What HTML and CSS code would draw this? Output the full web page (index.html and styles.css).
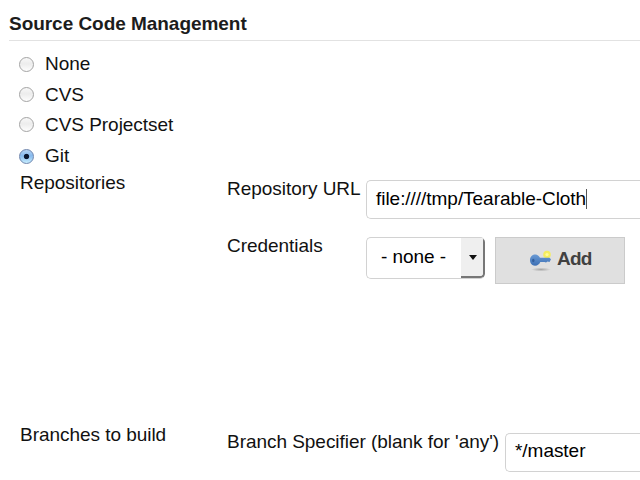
FILE: index.html
```html
<!DOCTYPE html>
<html lang="en">
<head>
<meta charset="utf-8">
<title>Source Code Management</title>
<link rel="stylesheet" href="styles.css">
</head>
<body>
<main class="config">
  <h1 class="section-title">Source Code Management</h1>
  <div class="scm-list">
    <div class="scm-option"><span class="radio"></span><span>None</span></div>
    <div class="scm-option option-low"><span class="radio"></span><span>CVS</span></div>
    <div class="scm-option option-low"><span class="radio"></span><span>CVS Projectset</span></div>
    <div class="scm-option"><span class="radio radio-checked"></span><span>Git</span></div>
  </div>
  <section class="setting repositories">
    <div class="setting-name">Repositories</div>
    <div class="fields">
      <div class="field">
        <span class="label">Repository URL</span>
        <div class="textbox">file:////tmp/Tearable-Cloth<span class="caret"></span></div>
      </div>
      <div class="field credentials">
        <span class="label">Credentials</span>
        <div class="select"><span class="select-value">- none -</span><span class="select-arrow"></span></div>
        <div class="button">
          <svg class="key" width="24" height="22" viewBox="0 0 24 22">
            <defs>
              <radialGradient id="shade"><stop offset="0" stop-color="#a5a5a5"/><stop offset="1" stop-color="#a5a5a5" stop-opacity="0"/></radialGradient>
              <linearGradient id="blue" x2="0" y2="1"><stop offset="0" stop-color="#6a9ad4"/><stop offset="1" stop-color="#3c6fb4"/></linearGradient>
            </defs>
            <ellipse cx="12" cy="19.5" rx="10" ry="1.9" fill="url(#shade)"/>
            <circle cx="18" cy="4.5" r="3.8" fill="#f7ee50" opacity=".9"/>
            <circle cx="18" cy="4.5" r="1.6" fill="#fffb9c"/>
            <path d="M6 4.500C8.500 4.500 10 6 11 7.700H20.500L22 9.300 20.500 12 18.500 11.600 17 12.600 15.500 12H11.300C10.500 14 8.800 15.700 6 15.700 3 15.700 1 13.200 1 10.100S3 4.500 6 4.500Z" fill="url(#blue)"/>
            <ellipse cx="4.300" cy="10.500" rx="1.200" ry="1.800" fill="#335f9c"/>
          </svg>
          <span>Add</span>
        </div>
      </div>
    </div>
  </section>
  <section class="setting branches">
    <div class="setting-name">Branches to build</div>
    <div class="fields">
      <div class="field">
        <span class="label label-long">Branch Specifier (blank for 'any')</span>
        <div class="textbox">*/master</div>
      </div>
    </div>
  </section>
</main>
</body>
</html>
```
FILE: styles.css
```css
* { box-sizing: border-box; }
body {
  margin: 0;
  background: #fff;
  color: #111;
  font: 19px/24px "Liberation Sans", Arial, sans-serif;
  letter-spacing: -0.04px;
  white-space: nowrap;
  overflow: hidden;
}
.config { height: 480px; padding-top: 12px; overflow: hidden; }
.section-title {
  margin: 0 0 0 9px;
  height: 29px;
  border-bottom: 1px solid #e2e2e2;
  color: #1c1c1c;
  font-size: 19px;
  line-height: 24px;
}
.scm-list { display: grid; grid-template-rows: 30px 30px 32px 24px; padding: 11px 0 0 19px; }
.scm-option { display: flex; height: 24px; gap: 11px; }
.option-low { padding-top: 1px; }
.option-low .radio { margin-top: 4px; }
.radio {
  width: 15px;
  height: 15px;
  margin-top: 5px;
  border: 1px solid #a4a4a4;
  border-radius: 50%;
  background: linear-gradient(#f8f8f8, #ececec 45%, #fdfdfd);
}
.radio-checked {
  border-color: #6f86ae;
  background: radial-gradient(circle, #0b1730 0 2.2px, transparent 3.1px), linear-gradient(#b5d3f3, #86baee 45%, #c8eefe);
}
.setting { display: grid; grid-template-columns: 207px 1fr; padding-left: 20px; }
.repositories { margin-top: 3px; height: 252px; }
.fields { min-width: 0; }
.field { display: flex; align-items: flex-start; }
.label { flex: none; width: 139px; }
.label-long { width: 278px; }
.repositories .fields { padding-top: 6px; }
.textbox {
  flex: 1;
  height: 39px;
  padding: 5px 9px;
  border: 1px solid #d2d2d2;
  border-right: 0;
  border-radius: 5px 0 0 5px;
  color: #000;
}
.repositories .textbox { margin-top: 3px; padding-top: 6px; }
.caret { display: inline-block; width: 1px; height: 20px; background: #555; vertical-align: -4px; }
.credentials { margin-top: 15px; }
.select {
  display: flex;
  width: 119px;
  height: 42px;
  margin-top: 3px;
  border: 1px solid #d2d2d2;
  border-right: 0;
  border-radius: 5px;
  overflow: hidden;
  color: #000;
}
.select-value { flex: 1; padding: 7px 0 0 14px; }
.select-arrow {
  display: flex;
  align-items: center;
  justify-content: center;
  width: 24px;
  border-right: 2px solid #777;
  border-bottom: 2px solid #777;
  border-radius: 0 0 4px 0;
  background: #efefef;
}
.select-arrow::before {
  content: "";
  margin-left: 2px;
  border: 4.5px solid transparent;
  border-top: 5px solid #111;
  border-bottom: 0;
}
.button {
  display: flex;
  width: 130px;
  height: 47px;
  margin: 3px 0 0 10px;
  padding: 9px 0 0 33px;
  border: 1px solid #cbcbcb;
  background: #e0e0e0;
  color: #414141;
  font-weight: bold;
  letter-spacing: -0.8px;
}
.key { flex: none; margin: 3px 4px 0 0; }
.branches .label { padding-top: 7px; }
.branches .textbox { margin-top: 10px; }
```
